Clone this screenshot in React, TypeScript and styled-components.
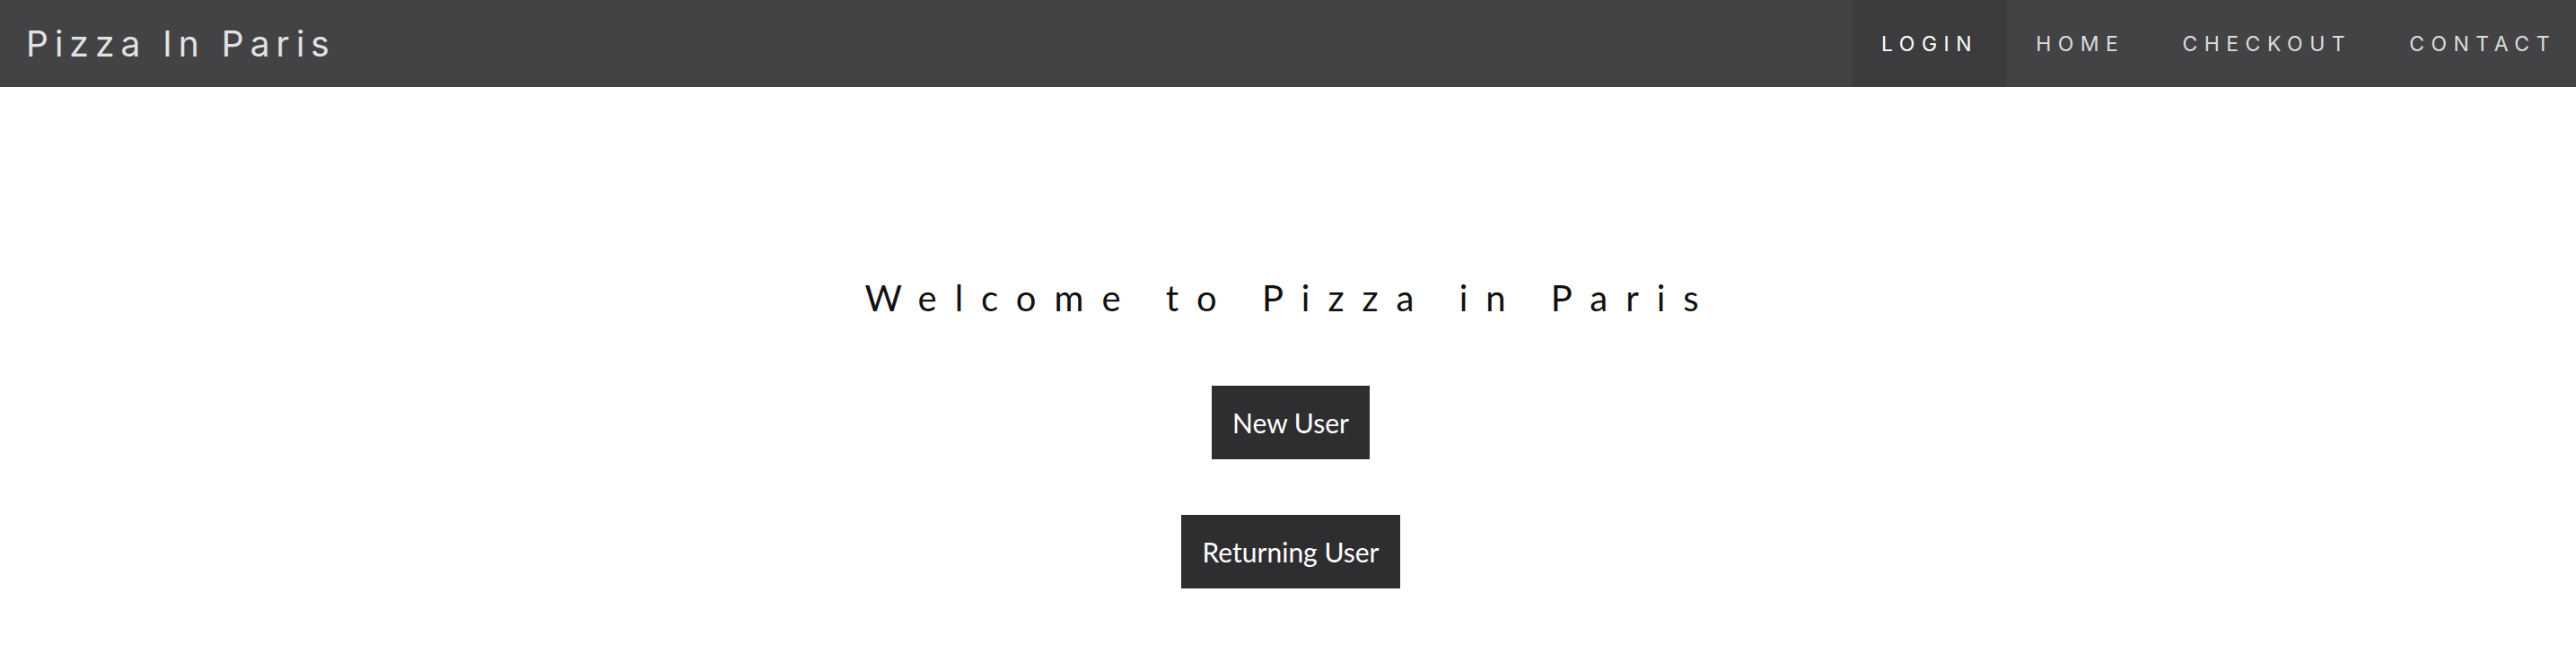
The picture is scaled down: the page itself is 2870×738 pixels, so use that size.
import React from "react";
import styled, { createGlobalStyle } from "styled-components";

const Global = createGlobalStyle`
  html, body { margin: 0; padding: 0; background: #ffffff; }
  body { font-family: "Lato", "Open Sans", sans-serif; }
`;

const Page = styled.div`
  width: 100%;
  min-height: 738px;
  background: #ffffff;
`;

const NavBar = styled.header`
  height: 97px;
  background: #434345;
  display: flex;
  align-items: stretch;
  justify-content: space-between;
`;

const Brand = styled.a`
  display: flex;
  align-items: center;
  padding-left: 29px;
  font-family: "Inter", "DejaVu Sans", sans-serif;
  font-size: 39px;
  font-weight: 400;
  letter-spacing: 7px;
  color: #e2e2e2;
  text-decoration: none;
`;

const NavList = styled.nav`
  display: flex;
  align-items: stretch;
`;

const NavItem = styled.a<{ $active?: boolean }>`
  display: flex;
  align-items: center;
  padding: 0 32px;
  font-family: "Inter", "DejaVu Sans", sans-serif;
  font-size: 23px;
  font-weight: 400;
  letter-spacing: 7.5px;
  color: ${(p) => (p.$active ? "#ffffff" : "#dcdcdc")};
  background: ${(p) => (p.$active ? "#3c3c3e" : "transparent")};
  text-decoration: none;
  &:last-child {
    padding-right: 22px;
  }
`;

const Main = styled.main`
  display: flex;
  flex-direction: column;
  align-items: center;
  padding-top: 211px;
  padding-left: 6px;
`;

const Heading = styled.h1`
  margin: 0 0 74px 0;
  font-family: "Lato", sans-serif;
  font-size: 40px;
  line-height: 48px;
  font-weight: 400;
  letter-spacing: 20px;
  color: #111111;
`;

const ButtonStack = styled.div`
  display: flex;
  flex-direction: column;
  align-items: center;
  gap: 62px;
`;

const Button = styled.button`
  font-family: "Lato", sans-serif;
  font-size: 30px;
  line-height: 46px;
  font-weight: 400;
  color: #ffffff;
  background: #2e2e30;
  border: none;
  padding: 18px 23px;
  cursor: pointer;
`;

export default function App() {
  return (
    <Page>
      <Global />
      <NavBar>
        <Brand href="#">Pizza In Paris</Brand>
        <NavList>
          <NavItem href="#" $active>
            LOGIN
          </NavItem>
          <NavItem href="#">HOME</NavItem>
          <NavItem href="#">CHECKOUT</NavItem>
          <NavItem href="#">CONTACT</NavItem>
        </NavList>
      </NavBar>
      <Main>
        <Heading>Welcome to Pizza in Paris</Heading>
        <ButtonStack>
          <Button>New User</Button>
          <Button>Returning User</Button>
        </ButtonStack>
      </Main>
    </Page>
  );
}
